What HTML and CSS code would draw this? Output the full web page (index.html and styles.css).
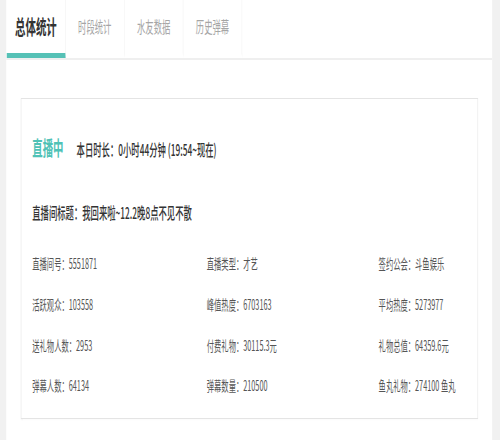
FILE: index.html
```html
<!DOCTYPE html>
<html>

<head>
    <meta charset="UTF-8" />
    <title>直播统计</title>
    <link rel="stylesheet" href="styles.css">
</head>

<body>
    <div class="viewport">
        <div class="page">
            <div class="main">
                <div class="tabs">
                    <div class="tab active">总体统计</div>
                    <div class="tab">时段统计</div>
                    <div class="tab">水友数据</div>
                    <div class="tab">历史弹幕</div>
                </div>
                <div class="card">
                    <div class="live-row">
                        <span class="live">直播中</span>
                        <span class="duration">本日时长：0小时44分钟 (19:54~现在)</span>
                    </div>
                    <div class="room-title">直播间标题：我回来啦~12.2晚8点不见不散</div>
                    <div class="stats">
                        <div>直播间号：5551871</div>
                        <div>直播类型：才艺</div>
                        <div>签约公会：斗鱼娱乐</div>
                        <div>活跃观众：103558</div>
                        <div>峰值热度：6703163</div>
                        <div>平均热度：5273977</div>
                        <div>送礼物人数：2953</div>
                        <div>付费礼物：30115.3元</div>
                        <div>礼物总值：64359.6元</div>
                        <div>弹幕人数：64134</div>
                        <div>弹幕数量：210500</div>
                        <div>鱼丸礼物：274100 鱼丸</div>
                    </div>
                </div>
            </div>
        </div>
    </div>
</body>

</html>
```

FILE: styles.css
```css
html,
body {
    margin: 0;
    padding: 0;
    background-color: #f1f1f1;
}

body {
    font-family: "Noto Sans CJK SC", "Noto Sans", sans-serif;
    color: #333;
}

.viewport {
    width: 500px;
    height: 440px;
    overflow: hidden;
}

/* the page is drawn 960px wide, then squeezed into the 500px window */
.page {
    width: 960px;
    height: 440px;
    padding: 0 15px 0 12px;
    box-sizing: border-box;
    transform: scaleX(0.5208);
    transform-origin: 0 0;
}

.main {
    background-color: #fff;
    height: 440px;
}

.tabs {
    display: flex;
    border-bottom: 2px solid #efefef;
    padding-left: 1px;
}

.tab {
    width: 112px;
    height: 53px;
    line-height: 53px;
    text-align: center;
    font-size: 16px;
    color: #a5a5a5;
    border-right: 1px solid #f0f0f0;
    border-bottom: 5px solid transparent;
}

.tab.active {
    font-size: 20px;
    font-weight: bold;
    color: #333;
    border-bottom-color: #56c1b6;
}

.card {
    margin: 38px 27px 0 28px;
    border: 1px solid #e4e4e4;
    box-shadow: 0 1px 2px rgba(0, 0, 0, 0.06);
    padding: 34px 21px 13px 21px;
    height: 321px;
    box-sizing: border-box;
}

.live-row {
    display: flex;
    align-items: baseline;
    line-height: 30px;
}

.live {
    font-size: 20px;
    font-weight: bold;
    color: #4fc2b6;
    margin-right: 25px;
}

.duration {
    font-size: 16px;
    font-weight: 500;
    color: #333;
}

.room-title {
    margin-top: 36px;
    font-size: 16px;
    font-weight: 500;
    line-height: 24px;
    color: #333;
}

.stats {
    margin-top: 19px;
    display: grid;
    grid-template-columns: 335px 330px 1fr;
    grid-auto-rows: 40.7px;
    align-items: center;
    font-size: 14px;
    color: #555;
}
```
